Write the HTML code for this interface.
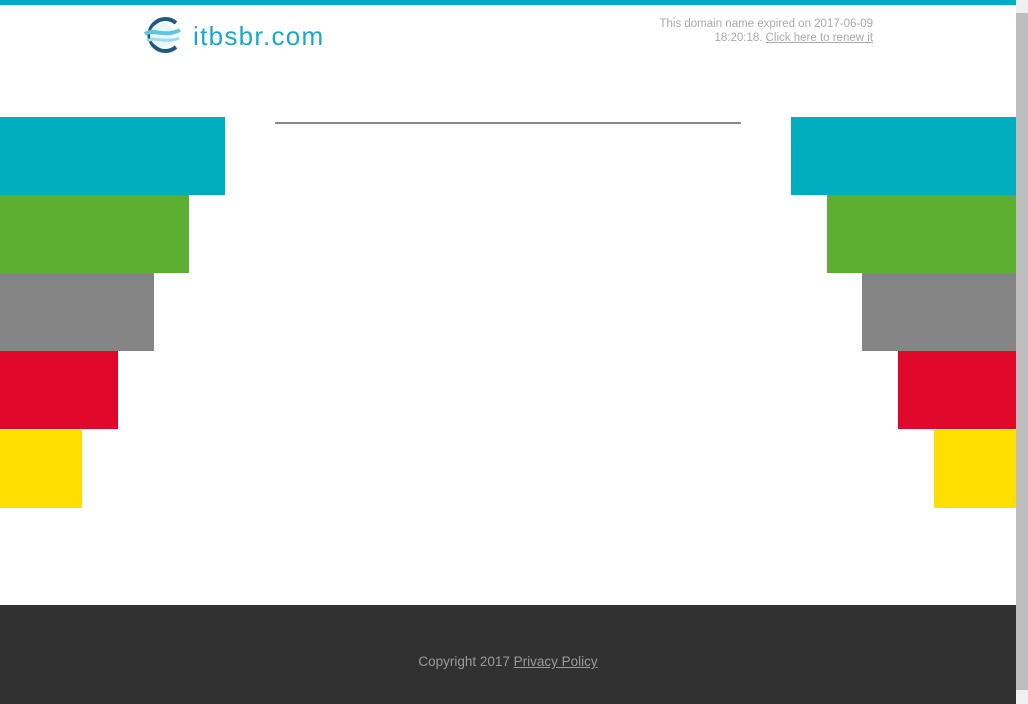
<!DOCTYPE html>
<html><head><meta charset="utf-8"><style>
*{margin:0;padding:0;box-sizing:border-box}
body{width:1028px;height:704px;overflow:hidden;background:#fff;position:relative;font-family:"Liberation Sans",sans-serif}
.b{position:absolute;height:78px}
</style></head><body>
<div style="position:absolute;left:0;top:0;width:1016px;height:5px;background:#00adbf"></div>
<svg style="position:absolute;left:142px;top:14px" width="42" height="42" viewBox="0 0 42 42">
<path d="M34 9 A16 16 0 1 0 34 33" fill="none" stroke="#1d5a80" stroke-width="4"/>
<circle cx="20" cy="21" r="12" fill="#e6f6fb"/>
<path d="M3 20 C12 14,22 24,38 16" fill="none" stroke="#5cc6e0" stroke-width="4"/>
<path d="M5 27 C14 22,24 30,37 24" fill="none" stroke="#9bdcec" stroke-width="3"/>
</svg>
<div style="position:absolute;left:193px;top:21px;font-size:26px;color:#1aa9c4;letter-spacing:1.3px">itbsbr.com</div>
<div style="position:absolute;right:155px;top:17px;text-align:right;font-size:11.5px;line-height:14px;color:#a9a9a9">This domain name expired on 2017-06-09<br>18:20:18. <u>Click here to renew it</u></div>
<div style="position:absolute;left:275px;top:122px;width:466px;height:2px;background:#888"></div>
<div class="b" style="left:0;top:117px;width:225px;background:#00adbf"></div>
<div class="b" style="left:0;top:195px;width:189px;background:#5daf32"></div>
<div class="b" style="left:0;top:273px;width:154px;background:#858585"></div>
<div class="b" style="left:0;top:351px;width:118px;background:#e0092c"></div>
<div class="b" style="left:0;top:430px;width:82px;background:#ffde00"></div>
<div class="b" style="left:791px;top:117px;width:225px;background:#00adbf"></div>
<div class="b" style="left:827px;top:195px;width:189px;background:#5daf32"></div>
<div class="b" style="left:862px;top:273px;width:154px;background:#858585"></div>
<div class="b" style="left:898px;top:351px;width:118px;background:#e0092c"></div>
<div class="b" style="left:934px;top:430px;width:82px;background:#ffde00"></div>
<div style="position:absolute;left:0;top:605px;width:1016px;height:99px;background:#313131"></div>
<div style="position:absolute;left:0;top:654px;width:1016px;text-align:center;font-size:13.5px;color:#9a9a9a">Copyright 2017 <u>Privacy Policy</u></div>
<div style="position:absolute;left:1016px;top:0;width:12px;height:704px;background:#f0f0f0"></div>
<div style="position:absolute;left:1016px;top:13px;width:12px;height:677px;background:#bdbdbd"></div>
</body></html>
